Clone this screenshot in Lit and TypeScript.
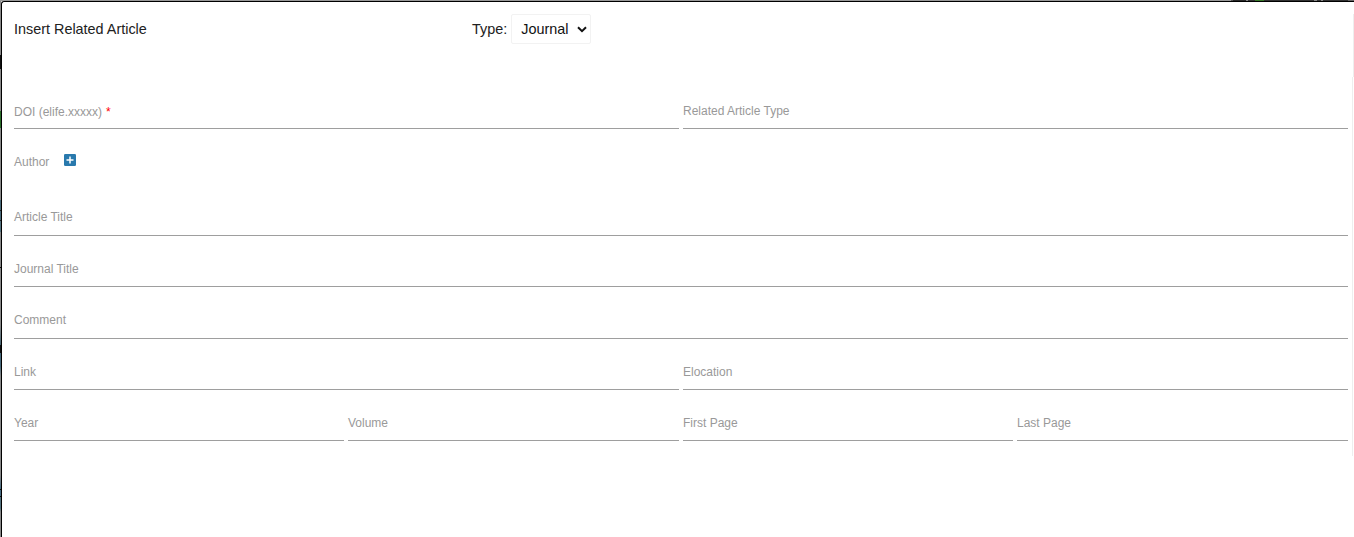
import { LitElement, html, css, nothing } from "lit";
import { customElement } from "lit/decorators.js";

interface Field {
  label: string;
  required?: boolean;
}

@customElement("form-field")
class FormField extends LitElement {
  static properties = { label: { type: String }, required: { type: Boolean } };
  declare label: string;
  declare required: boolean;

  static styles = css`
    :host {
      display: flex;
      align-items: flex-end;
      box-sizing: border-box;
      min-width: 0;
      border-bottom: 1px solid #9e9e9e;
      padding-bottom: var(--label-gap, 10px);
      font-size: 12px;
      line-height: 14px;
      color: #999;
      white-space: nowrap;
    }
    .required {
      color: #f00;
      margin-left: 4px;
    }
  `;

  render() {
    return html`<span>${this.label}</span>${this.required
        ? html`<span class="required">*</span>`
        : nothing}`;
  }
}

@customElement("app-root")
class AppRoot extends LitElement {
  static styles = css`
    :host {
      display: block;
      height: 537px;
      overflow: hidden;
      box-sizing: border-box;
      padding: 1px 0 0 1px;
      font-family: "Liberation Sans", Arial, sans-serif;
      background:
        linear-gradient(90deg, #999 0 1231px, #555 1231px 1233px, #292929 1233px 1246px, #888 1246px 1248px,
          #333 1248px 1255px, #397a2b 1255px 1264px, #333 1264px 1314px, #888 1314px 1317px, #333 1317px 1321px,
          #888 1321px 1323px, #333 1323px 1348px, #666 1348px) 0 0 / 100% 1px no-repeat,
        linear-gradient(#888 0 55px, #111 55px 69px, #888 69px 111px, #286b28 111px 128px, #888 128px 200px,
          #476878 200px 210px, #222 210px 211px, #476878 211px 220px, #222 220px 221px, #52717e 221px 232px,
          #888 232px 267px, #111 267px 268px, #888 268px 325px, #456472 345px, #111 345px 353px,
          #45677a 353px 366px, #888 376px 475px, #456a82 489px, #111 489px 490px, #456a82 490px 496px,
          #111 496px 497px, #52717e 497px 508px, #888 512px) 0 0 / 1px 100% no-repeat;
    }
    .dialog {
      height: 536px;
      box-sizing: border-box;
      border: solid #000;
      border-width: 1px 0 0 1px;
      border-top-left-radius: 3px;
      background: #fff;
    }
    .header {
      display: grid;
      grid-template-columns: 458px auto 1fr;
      align-items: center;
      height: 30px;
      padding: 0 0 33px 12px;
      margin-top: 12px;
      border-right: 1px solid #eee;
      font-size: 14.4px;
      color: #212121;
    }
    .select {
      display: flex;
      align-items: center;
      justify-content: space-between;
      box-sizing: border-box;
      width: 80px;
      height: 30px;
      margin-left: 4px;
      padding: 0 3px 0 9px;
      border: 1px solid #f2f2f2;
      border-radius: 2px;
      color: #111;
    }
    .chevron {
      display: block;
      width: 10px;
      height: 7px;
    }
    .form {
      height: 379px;
      box-sizing: border-box;
      margin-right: 1px;
      padding: 0 4px 0 12px;
      border-right: 1px solid #eee;
    }
    .row {
      display: grid;
      grid-auto-flow: column;
      grid-auto-columns: minmax(0, 1fr);
      column-gap: 4px;
      height: 51px;
    }
    .tall {
      height: 52px;
      --label-gap: 11px;
    }
    .first {
      height: 52px;
    }
    .first > :first-child {
      --label-gap: 9px;
    }
    .quarters {
      grid-template-columns: 330fr 331fr 330fr 331fr;
    }
    .author {
      display: flex;
      align-items: flex-start;
      box-sizing: border-box;
      height: 55px;
      padding-top: 26px;
      font-size: 12px;
      line-height: 14px;
      color: #999;
    }
    .plus {
      display: block;
      width: 12px;
      height: 12px;
      margin: -1px 0 0 14.6px;
    }
  `;

  private row(kind: string, fields: Field[]) {
    return html`<div class="row ${kind}">
      ${fields.map((f) => html`<form-field .label=${f.label} .required=${!!f.required}></form-field>`)}
    </div>`;
  }

  render() {
    return html`
      <div class="dialog">
        <div class="header">
          <span>Insert Related Article</span>
          <span>Type:</span>
          <div class="select">
            <span>Journal</span>
            <svg class="chevron" viewBox="0 0 10 7" fill="none" stroke="#111" stroke-width="2">
              <path d="M1 1.3 5 5.2 9 1.3" />
            </svg>
          </div>
        </div>
        <div class="form">
          ${this.row("first", [{ label: "DOI (elife.xxxxx)", required: true }, { label: "Related Article Type" }])}
          <div class="author">
            <span>Author</span>
            <svg class="plus" viewBox="0 0 12 12">
              <rect width="12" height="12" rx="1.3" fill="#2979ad" />
              <path d="M6 2.5v7M2.5 6h7" stroke="#fff" stroke-width="1.5" />
            </svg>
          </div>
          ${this.row("tall", [{ label: "Article Title" }])}
          ${this.row("", [{ label: "Journal Title" }])}
          ${this.row("tall", [{ label: "Comment" }])}
          ${this.row("", [{ label: "Link" }, { label: "Elocation" }])}
          ${this.row("quarters", [{ label: "Year" }, { label: "Volume" }, { label: "First Page" }, { label: "Last Page" }])}
        </div>
      </div>
    `;
  }
}
